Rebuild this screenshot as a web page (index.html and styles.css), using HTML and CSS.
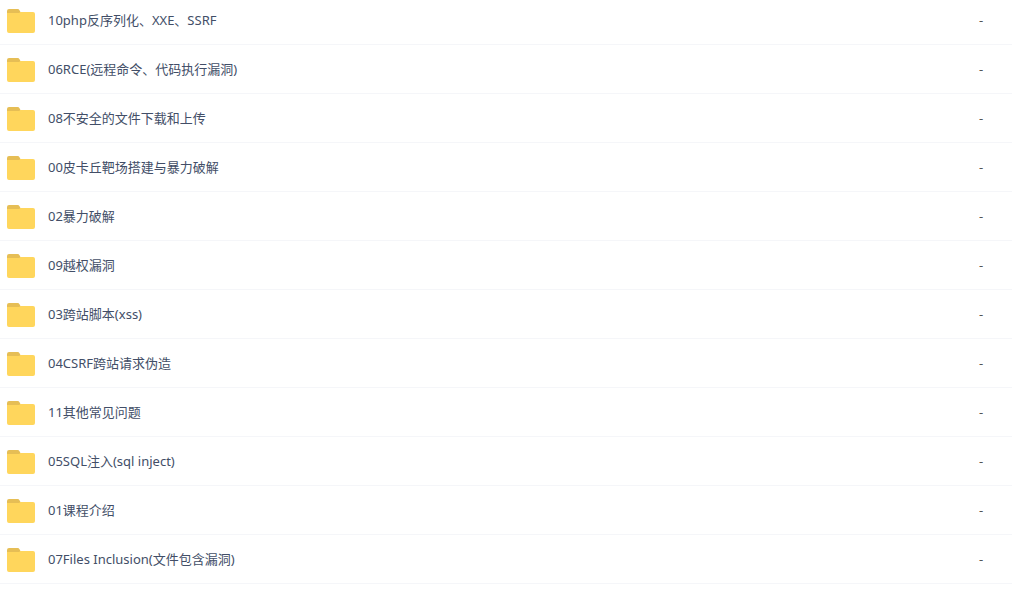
FILE: index.html
```html
<!DOCTYPE html>
<html lang="zh-CN">
<head>
<meta charset="utf-8">
<meta name="viewport" content="width=device-width, initial-scale=1">
<title>文件列表</title>
<link rel="stylesheet" href="styles.css">
</head>
<body>
<svg class="sprite" width="0" height="0" aria-hidden="true">
  <symbol id="folder" viewBox="0 0 28 24">
    <path fill="#e6be55" d="M0 8V2Q0 0 2 0H10.500Q12 0 12.500 1.200L14 4V8Z"/>
    <path fill="#ffd65c" d="M0 4H12L13.500 3H26Q28 3 28 5V22Q28 24 26 24H2Q0 24 0 22Z"/>
  </symbol>
</svg>
<table class="files">
  <tbody>
    <tr class="row"><td class="icon"><svg class="folder"><use href="#folder"/></svg></td><td class="name">10php反序列化、XXE、SSRF</td><td class="size">-</td></tr>
    <tr class="row"><td class="icon"><svg class="folder"><use href="#folder"/></svg></td><td class="name">06RCE(远程命令、代码执行漏洞)</td><td class="size">-</td></tr>
    <tr class="row"><td class="icon"><svg class="folder"><use href="#folder"/></svg></td><td class="name">08不安全的文件下载和上传</td><td class="size">-</td></tr>
    <tr class="row"><td class="icon"><svg class="folder"><use href="#folder"/></svg></td><td class="name">00皮卡丘靶场搭建与暴力破解</td><td class="size">-</td></tr>
    <tr class="row"><td class="icon"><svg class="folder"><use href="#folder"/></svg></td><td class="name">02暴力破解</td><td class="size">-</td></tr>
    <tr class="row"><td class="icon"><svg class="folder"><use href="#folder"/></svg></td><td class="name">09越权漏洞</td><td class="size">-</td></tr>
    <tr class="row"><td class="icon"><svg class="folder"><use href="#folder"/></svg></td><td class="name">03跨站脚本(xss)</td><td class="size">-</td></tr>
    <tr class="row"><td class="icon"><svg class="folder"><use href="#folder"/></svg></td><td class="name">04CSRF跨站请求伪造</td><td class="size">-</td></tr>
    <tr class="row"><td class="icon"><svg class="folder"><use href="#folder"/></svg></td><td class="name">11其他常见问题</td><td class="size">-</td></tr>
    <tr class="row"><td class="icon"><svg class="folder"><use href="#folder"/></svg></td><td class="name">05SQL注入(sql inject)</td><td class="size">-</td></tr>
    <tr class="row"><td class="icon"><svg class="folder"><use href="#folder"/></svg></td><td class="name">01课程介绍</td><td class="size">-</td></tr>
    <tr class="row"><td class="icon"><svg class="folder"><use href="#folder"/></svg></td><td class="name">07Files Inclusion(文件包含漏洞)</td><td class="size">-</td></tr>
  </tbody>
</table>
</body>
</html>
```

FILE: styles.css
```css
body {
  margin: 0;
  background: #fff;
  color: #424e67;
  font: 13px/20px "Noto Sans", "Noto Sans CJK SC", sans-serif;
}

.sprite {
  display: block;
}

.files {
  width: 100%;
  margin-top: -4px;
  border-collapse: separate;
  border-spacing: 0;
}

.files td {
  height: 48px;
  padding: 0;
  border-bottom: 1px solid #f5f6f9;
  vertical-align: middle;
}

.files .icon {
  width: 41px;
  padding: 2px 0 0 7px;
  height: 46px;
}

.folder {
  display: block;
  width: 28px;
  height: 24px;
}

.files .size {
  width: 33px;
  color: #555;
}
```
